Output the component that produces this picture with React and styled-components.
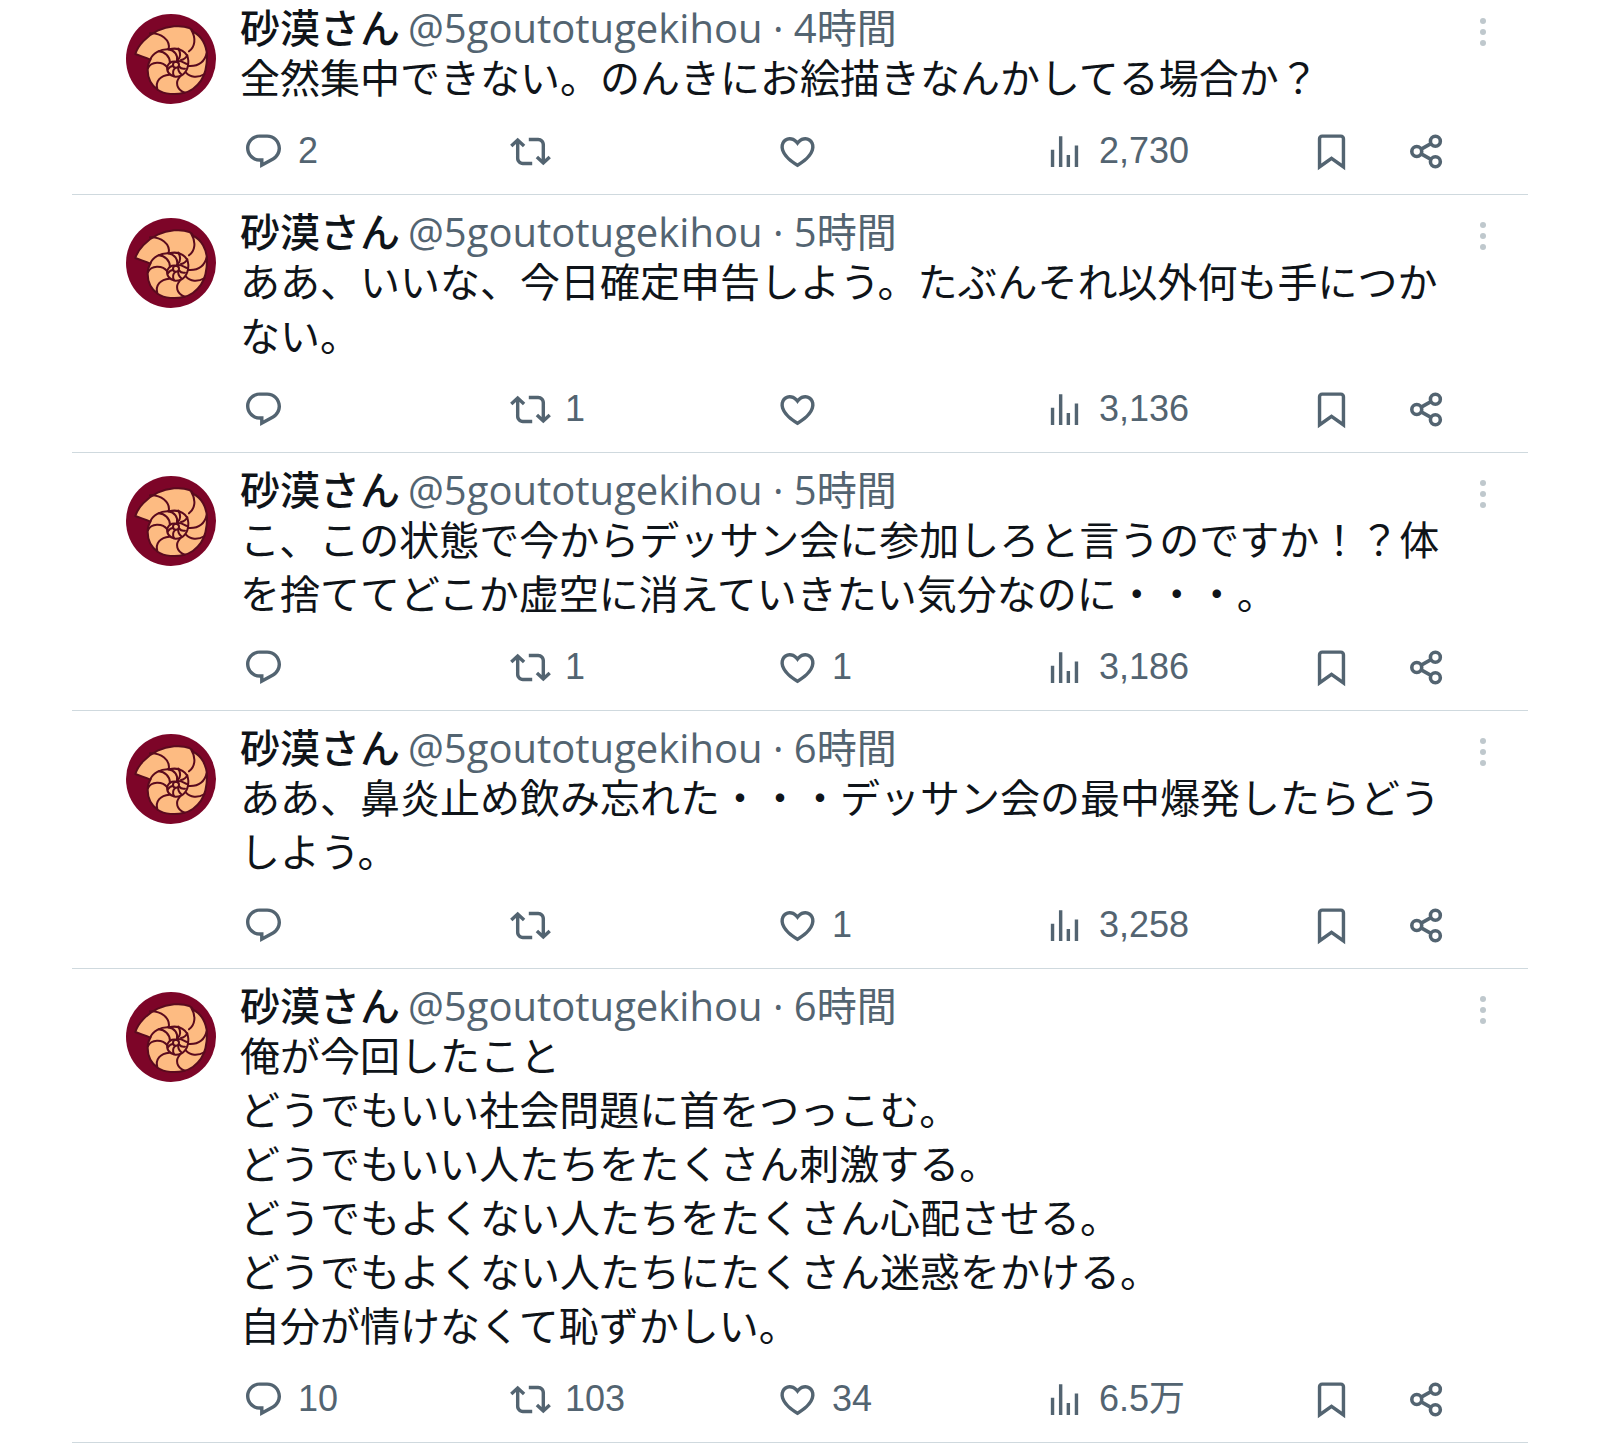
import styled, {createGlobalStyle} from "styled-components";


const GlobalStyle = createGlobalStyle`
  body {
    margin: 0;
    background: #FFFFFF;
  }
`;

const Feed = styled.main`
  margin: 0 72px;
  font-family: 'Noto Sans CJK JP', 'Noto Sans', sans-serif;
  font-size: 40px;
  color: #0F1419;
`;

const Post = styled.article`
  display: flex;
  align-items: flex-start;
  padding: 9px 21px 20px 54px;
  border-bottom: 1px solid #CFD9DE;

  &:first-child {
    padding-top: 0;
  }
`;

const Avatar = styled.svg`
  flex: none;
  width: 90px;
  height: 90px;
  margin-top: 14px;
  margin-right: 24px;
`;

const Content = styled.div`
  flex: 1;
  min-width: 0;
`;

const Header = styled.header`
  display: flex;
  align-items: baseline;
  gap: 8px;
  height: 46px;
  padding-top: 3px;
  line-height: 46px;
  white-space: nowrap;
`;

const Name = styled.a`
  font-weight: 500;
  color: inherit;
  text-decoration: none;
`;

const Handle = styled.a`
  font-family: 'Open Sans', 'Noto Sans CJK JP', sans-serif;
  color: #536471;
  text-decoration: none;
`;

const Text = styled.p`
  margin: 0 0 25px;
  line-height: 54px;
  white-space: pre-line;
`;

const Actions = styled.div`
  display: grid;
  grid-template-columns: repeat(4, 1fr) 95px 47px;
`;

const ActionButton = styled.button`
  display: flex;
  align-items: center;
  gap: 12px;
  height: 46px;
  padding: 0;
  border: none;
  background: none;
  color: #536471;
  font-family: 'Liberation Sans', 'Noto Sans CJK JP', sans-serif;
  font-size: 36px;
  line-height: 46px;
  cursor: pointer;
`;

const Icon = styled.svg`
  flex: none;
  width: 41px;
  height: 41px;
  margin-left: 3px;
  margin-right: 2px;
  fill: currentColor;
`;

const MenuButton = styled.button`
  flex: none;
  display: flex;
  flex-direction: column;
  align-items: center;
  justify-content: center;
  gap: 5px;
  width: 48px;
  height: 48px;
  margin-top: 8px;
  margin-left: 9px;
  padding: 0;
  border: none;
  background: none;
  cursor: pointer;
`;

const Dot = styled.span`
  width: 6px;
  height: 6px;
  border-radius: 50%;
  background: #BFC8CD;
`;


const icons = {
    reply: <path d="M1.751 10c0-4.42 3.584-8 8.005-8h4.366c4.49 0 8.129 3.64 8.129 8.13 0 2.96-1.607 5.68-4.196 7.11l-8.054 4.46v-3.69h-.067c-4.49.1-8.183-3.51-8.183-8.01zm8.005-6c-3.317 0-6.005 2.69-6.005 6 0 3.37 2.77 6.08 6.138 6.01l.351-.01h1.761v2.3l5.087-2.81c1.951-1.08 3.163-3.13 3.163-5.36 0-3.39-2.744-6.13-6.129-6.13H9.756z"/>,
    repost: <path d="M4.5 3.88l4.432 4.14-1.364 1.46L5.5 7.55V16c0 1.1.896 2 2 2H13v2H7.5c-2.209 0-4-1.79-4-4V7.55L1.432 9.48.068 8.02 4.5 3.88zM16.5 6H11V4h5.5c2.209 0 4 1.79 4 4v8.45l2.068-1.93 1.364 1.46-4.432 4.14-4.432-4.14 1.364-1.46 2.068 1.93V8c0-1.1-.896-2-2-2z"/>,
    like: <path d="M16.697 5.5c-1.222-.06-2.679.51-3.89 2.16l-.805 1.09-.806-1.09C9.984 6.01 8.526 5.44 7.304 5.5c-1.243.07-2.349.78-2.91 1.91-.552 1.12-.633 2.78.479 4.82 1.074 1.97 3.257 4.27 7.129 6.61 3.87-2.34 6.052-4.64 7.126-6.61 1.111-2.04 1.03-3.7.477-4.82-.561-1.13-1.666-1.84-2.908-1.91zm4.187 7.69c-1.351 2.48-4.001 5.12-8.379 7.67l-.503.3-.504-.3c-4.379-2.55-7.029-5.19-8.382-7.67-1.36-2.5-1.41-4.86-.514-6.67.887-1.79 2.647-2.91 4.601-3.01 1.651-.09 3.368.56 4.798 2.01 1.429-1.45 3.146-2.1 4.796-2.01 1.954.1 3.714 1.22 4.601 3.01.896 1.81.846 4.17-.514 6.67z"/>,
    views: <path d="M8.75 21V3h2v18h-2zM18 21V8.5h2V21h-2zM4 21l.004-10h2L6 21H4zm9.248 0v-7h2v7h-2z"/>,
    bookmark: <path d="M4 4.5C4 3.12 5.119 2 6.5 2h11C18.881 2 20 3.12 20 4.5v18.44l-8-5.71-8 5.71V4.5zM6.5 4c-.276 0-.5.22-.5.5v14.56l6-4.29 6 4.29V4.5c0-.28-.224-.5-.5-.5h-11z"/>,
    share: (
        <g fill="none" stroke="currentColor" strokeWidth="2.1">
            <circle cx="6.3" cy="12" r="2.9"/>
            <circle cx="17.2" cy="6" r="2.9"/>
            <circle cx="17.2" cy="18" r="2.9"/>
            <path d="M8.9 10.6l5.7-3.2M8.9 13.4l5.7 3.2"/>
        </g>
    ),
};

const posts = [
    {
        time: "4時間",
        text: "全然集中できない。のんきにお絵描きなんかしてる場合か？",
        reply: "2", views: "2,730",
    },
    {
        time: "5時間",
        text: "ああ、いいな、今日確定申告しよう。たぶんそれ以外何も手につかない。",
        repost: "1", views: "3,136",
    },
    {
        time: "5時間",
        text: "こ、この状態で今からデッサン会に参加しろと言うのですか！？体を捨ててどこか虚空に消えていきたい気分なのに・・・。",
        repost: "1", like: "1", views: "3,186",
    },
    {
        time: "6時間",
        text: "ああ、鼻炎止め飲み忘れた・・・デッサン会の最中爆発したらどうしよう。",
        like: "1", views: "3,258",
    },
    {
        time: "6時間",
        text: "俺が今回したこと\nどうでもいい社会問題に首をつっこむ。\nどうでもいい人たちをたくさん刺激する。\nどうでもよくない人たちをたくさん心配させる。\nどうでもよくない人たちにたくさん迷惑をかける。\n自分が情けなくて恥ずかしい。",
        reply: "10", repost: "103", like: "34", views: "6.5万",
    },
];

const actions = [
    ["reply", "返信"],
    ["repost", "リポスト"],
    ["like", "いいね"],
    ["views", "表示"],
    ["bookmark", "ブックマーク"],
    ["share", "共有"],
];

const ShellAvatar = () => (
    <Avatar viewBox="0 0 270 270" aria-hidden="true">
        <circle cx="135" cy="135" r="135" fill="#7D0528"/>
        <g fill="none" stroke="#5A0A1E" strokeWidth="6" strokeLinejoin="round" strokeLinecap="round">
            <path fill="#FDBB82" d="M28 120C36 94 62 66 95 50C125 36 165 32 190 42C197 45 200 50 202 54C226 64 242 95 243 125C243 152 238 180 225 200C212 220 190 234 172 237C150 243 115 241 96 228C76 214 65 192 65 168C65 155 68 145 73 137C58 130 42 126 28 120Z"/>
            <path d="M72 58C104 56 134 78 128 106"/>
            <path d="M196 48C211 73 207 98 189 112"/>
            <path d="M242 118C236 142 218 158 187 156"/>
            <path d="M236 180C215 193 192 190 180 176"/>
            <path d="M176 236C151 227 147 204 162 188"/>
            <path d="M94 226C87 201 104 184 130 182"/>
            <path d="M66 162C75 142 109 140 124 160"/>
            {/* inner whorl */}
            <path d="M73 137C79 118 104 104 130 106C160 98 186 115 187 140C188 170 171 189 148 188C129 185 119 170 125 155C130 143 144 139 155 145"/>
            <path d="M98 112C117 113 131 127 132 146"/>
            <path d="M126 106C146 109 157 124 153 142"/>
            <path d="M157 104C164 116 164 128 156 138"/>
            <path d="M184 124C179 133 173 137 165 138"/>
            <path d="M153 142C167 138 174 149 186 151"/>
            <path d="M160 158C164 164 170 165 177 164"/>
            <path d="M157 160C155 170 159 175 166 181"/>
            <path d="M148 162C140 168 140 178 144 187"/>
            <path d="M141 156C135 156 129 161 126 166"/>
            <circle cx="150" cy="152" r="9"/>
        </g>
    </Avatar>
);

const PostItem = ({item}) => (
    <Post>
        <ShellAvatar/>
        <Content>
            <Header>
                <Name href="#profile">砂漠さん</Name>
                <Handle href="#post">@5goutotugekihou · {item.time}</Handle>
            </Header>
            <Text>{item.text}</Text>
            <Actions>
                {actions.map(([key, label]) => (
                    <ActionButton key={key} type="button" aria-label={label}>
                        <Icon viewBox="0 0 24 24" aria-hidden="true">{icons[key]}</Icon>
                        {item[key]}
                    </ActionButton>
                ))}
            </Actions>
        </Content>
        <MenuButton type="button" aria-label="もっと見る">
            <Dot/>
            <Dot/>
            <Dot/>
        </MenuButton>
    </Post>
);

const App = () => {
    return (
        <>
            <GlobalStyle/>
            <Feed>
                {posts.map((item, i) => (
                    <PostItem key={i} item={item}/>
                ))}
            </Feed>
        </>
    )
}

export default App;
